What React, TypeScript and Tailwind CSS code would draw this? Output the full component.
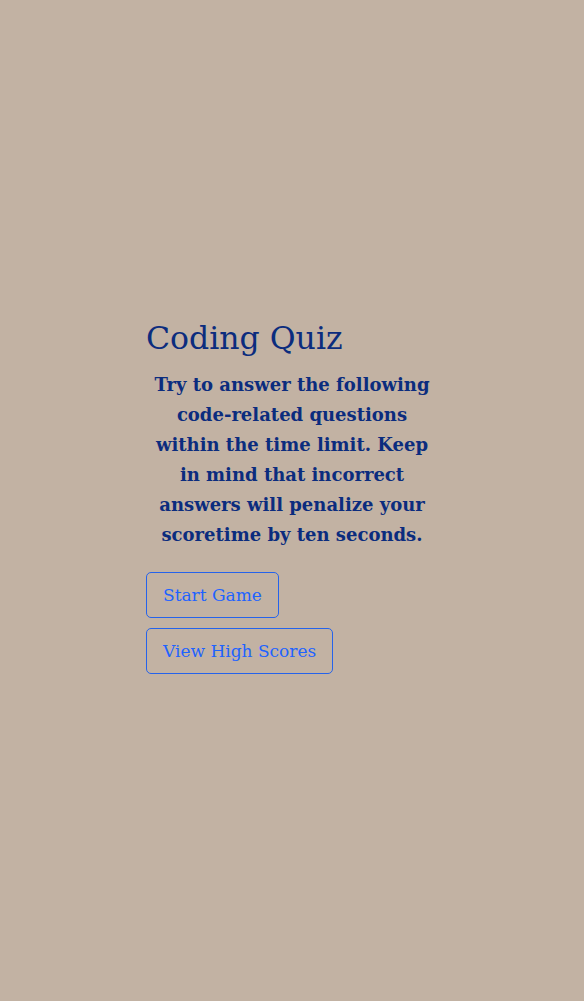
export default function App() {
  return (
    <main className="min-h-screen bg-[#c2b2a3] flex items-center justify-center font-['DejaVu_Serif',serif]">
      <div className="w-[292px] flex flex-col items-start pb-[10px]">
        <h1 className="text-[31.5px] leading-[40px] text-[#0b2c7e] mb-3">Coding Quiz</h1>
        <p className="text-[18px] leading-[30px] font-bold text-[#0b2c7e] text-center mb-[22px]">
          Try to answer the following code-related questions within the time limit. Keep in mind that
          incorrect answers will penalize your scoretime by ten seconds.
        </p>
        <button className="text-[17px] leading-[28px] px-4 py-2 border border-[#2563eb] rounded-[5px] text-[#1e63ff] mb-2.5">
          Start Game
        </button>
        <button className="text-[17px] leading-[28px] px-4 py-2 border border-[#2563eb] rounded-[5px] text-[#1e63ff]">
          View High Scores
        </button>
      </div>
    </main>
  );
}
